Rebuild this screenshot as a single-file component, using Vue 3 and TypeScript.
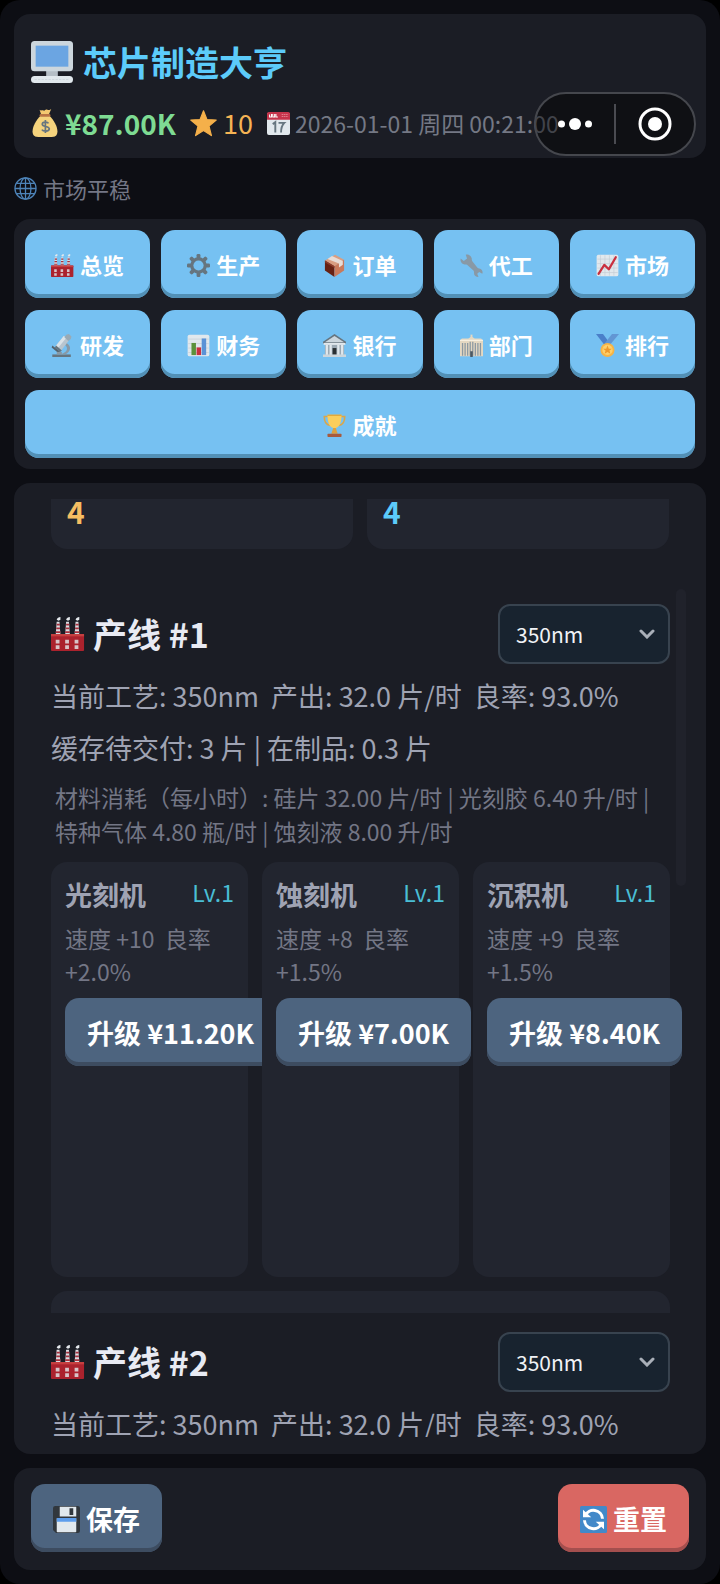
<script setup lang="ts">
import { ref } from 'vue'

interface NavItem {
  icon: string
  label: string
  wide?: boolean
}

interface Machine {
  name: string
  level: number
  effect: string
  cost: string
}

const nav: NavItem[] = [
  { icon: 'factory', label: '总览' },
  { icon: 'gear', label: '生产' },
  { icon: 'package', label: '订单' },
  { icon: 'wrench', label: '代工' },
  { icon: 'trend', label: '市场' },
  { icon: 'microscope', label: '研发' },
  { icon: 'bars', label: '财务' },
  { icon: 'bank', label: '银行' },
  { icon: 'store', label: '部门' },
  { icon: 'medal', label: '排行' },
  { icon: 'trophy', label: '成就', wide: true },
]

const machines: Machine[] = [
  { name: '光刻机', level: 1, effect: '速度 +10  良率 +2.0%', cost: '¥11.20K' },
  { name: '蚀刻机', level: 1, effect: '速度 +8  良率 +1.5%', cost: '¥7.00K' },
  { name: '沉积机', level: 1, effect: '速度 +9  良率 +1.5%', cost: '¥8.40K' },
]

const summary = '当前工艺: 350nm  产出: 32.0 片/时  良率: 93.0%'
const materials =
  '材料消耗（每小时）: 硅片 32.00 片/时 | 光刻胶 6.40 升/时 | 特种气体 4.80 瓶/时 | 蚀刻液 8.00 升/时'

const process1 = ref('350nm')
const process2 = ref('350nm')
</script>

<template>
  <svg class="sprite" aria-hidden="true">
    <symbol id="i-computer" viewBox="0 0 36 36">
      <rect x="13" y="24" width="10" height="8" fill="#b5bec6" />
      <rect x="0" y="0" width="36" height="26" rx="3" fill="#ccd6dd" />
      <rect x="4" y="4" width="28" height="18" fill="#6ba5e2" />
      <rect x="0" y="30" width="36" height="6" rx="3" fill="#e1e8ed" />
      <path d="M3 33h30" stroke="#cfd8de" stroke-width="1" stroke-dasharray="2 1" />
    </symbol>
    <symbol id="i-money" viewBox="0 0 36 36">
      <path d="M12 9h12c5 5 10 13 10 20 0 5-3 7-7 7H9c-4 0-7-2-7-7C2 22 7 14 12 9z" fill="#f5d37d" />
      <path d="M11 1c2 2 3 0 5 1s2-2 5-1 3 0 5-1l-3 7H13z" fill="#f5c870" />
      <rect x="11" y="6.500" width="14" height="3.500" rx="1.700" fill="#b97445" />
      <path d="M22.500 18.500c-1-2-8-2.500-8 1 0 4 9 2 9 6s-8 3.500-9.500 1M18.500 14v17" fill="none" stroke="#67757f" stroke-width="2.200" />
    </symbol>
    <symbol id="i-star" viewBox="0 0 36 36">
      <path d="M18 1l4.600 11.600L35 13.400l-9.600 8 3.200 12.800L18 27.400 7.400 34.200l3.200-12.800L1 13.400l12.400-.8z" fill="#f5b04a" stroke="#f5b04a" stroke-width="1.500" stroke-linejoin="round" />
    </symbol>
    <symbol id="i-calendar" viewBox="0 0 36 36">
      <rect x="0" y="1" width="36" height="35" rx="3" fill="#e1e8ed" />
      <path d="M3 0h30a3 3 0 0 1 3 3v9H0V3a3 3 0 0 1 3-3z" fill="#c5344b" />
      <path d="M4 4v4h3V3M9 3v5h3V3M14 3v5h3" fill="none" stroke="#fff" stroke-width="1.600" />
      <path d="M23 4h10M23 7h10" stroke="#e08492" stroke-width="1.600" stroke-dasharray="2 1" />
      <path d="M9 19l4-3v16M18 17h9c-4 4-5 9-5 15" fill="none" stroke="#66757f" stroke-width="3" />
    </symbol>
    <symbol id="i-globe" viewBox="0 0 36 36">
      <g fill="none" stroke="#4d83b8" stroke-width="2">
        <circle cx="18" cy="18" r="16.500" />
        <ellipse cx="18" cy="18" rx="8.500" ry="16.500" />
        <path d="M18 1.500v33M1.500 18h33M4 10h28M4 26h28" />
      </g>
    </symbol>
    <symbol id="i-factory" viewBox="0 0 36 36">
      <g v-for="x in [5, 15, 25]" :key="x">
        <path :d="`M${x + 1} 5h3l1 14h-5z`" fill="#d8dde2" />
        <path :d="`M${x + 1} 8h3.400M${x + 0.500} 12h4M${x} 16h5`" stroke="#a6303d" stroke-width="1.800" />
        <path :d="`M${x + 1} 3q1-3 4-3v3l-2 1z`" fill="#e5e9ed" />
      </g>
      <rect x="0" y="18" width="35" height="18" rx="1" fill="#ab222d" />
      <rect x="0" y="18" width="35" height="2.500" fill="#c63f40" />
      <g fill="#d8c4c8">
        <path d="M5 24h4v4H5zM15 24h4v4h-4zM25 24h4v4h-4zM5 30h4v4H5zM15 30h4v4h-4zM25 30h4v4h-4z" />
      </g>
    </symbol>
    <symbol id="i-gear" viewBox="0 0 36 36">
      <g fill="#66757f">
        <rect v-for="a in [0, 45, 90, 135]" :key="a" x="15" y="0" width="6" height="36" rx="2" :transform="`rotate(${a} 18 18)`" />
        <circle cx="18" cy="18" r="13" />
      </g>
      <circle cx="18" cy="18" r="8" fill="#76c1f2" />
    </symbol>
    <symbol id="i-package" viewBox="0 0 36 36">
      <path d="M3 10L19 1l14 8-15 11z" fill="#d99e82" />
      <path d="M3 10l15 9v17L3 26z" fill="#662113" />
      <path d="M18 19l15-10v17L18 36z" fill="#c97a5c" />
      <path d="M7 8l7-5 17 8v6l-6 4v-6z" fill="#e8dcd6" />
      <path d="M3 10l15 9v3L3 13z" fill="#8c3b29" />
    </symbol>
    <symbol id="i-wrench" viewBox="0 0 36 36">
      <path d="M9 1c4-1 8 1 9 5 1 2 0 3 1 5l8 10c2 2 4 1 6 3 2 2 3 4 2 7l-5-3-3 3 2 5c-4 0-7-2-7-5 0-2 0-4-1-5L11 17c-2-1-3 0-5-1-4-1-6-5-5-9l5 4 5-4z" fill="#8899a6" />
    </symbol>
    <symbol id="i-trend" viewBox="0 0 36 36">
      <rect x="1" y="1" width="34" height="34" rx="3" fill="#e1e8ed" />
      <path d="M7 2v32M14 2v32M21 2v32M28 2v32M2 8h32M2 15h32M2 22h32M2 29h32" stroke="#c3cdd5" stroke-width="1" />
      <path d="M4 31l9-14 7 7L31 5" fill="none" stroke="#c9303f" stroke-width="3.500" stroke-linecap="round" stroke-linejoin="round" />
    </symbol>
    <symbol id="i-microscope" viewBox="0 0 36 36">
      <path d="M2 32h29v4H2z" fill="#66757f" />
      <path d="M24 14c9 5 7 14-2 18h-7c10-3 13-9 7-15z" fill="#8899a6" />
      <path d="M2 18l13 10-2 3L1 21z" fill="#55636e" />
      <path d="M20 3l8 7-12 16-9-7z" fill="#b8c5cf" />
      <path d="M20 3l4 3-13 16-4-3z" fill="#dbe3e8" />
      <path d="M24 1l4-1 4 4-1 4-4 3-6-6z" fill="#99aab5" />
      <path d="M8 18l9 8-3 2-8-7z" fill="#66757f" />
      <path d="M9 28h8v4H9z" fill="#8899a6" />
    </symbol>
    <symbol id="i-bars" viewBox="0 0 36 36">
      <rect x="1" y="1" width="34" height="34" rx="3" fill="#e1e8ed" />
      <path d="M2 8h32M2 15h32M2 22h32M2 29h32" stroke="#c3cdd5" stroke-width="1" />
      <rect x="7" y="14" width="7" height="19" fill="#5c913b" />
      <rect x="15" y="21" width="7" height="12" fill="#c9303f" />
      <rect x="23" y="7" width="7" height="26" fill="#5a92d6" />
    </symbol>
    <symbol id="i-bank" viewBox="0 0 36 36">
      <rect x="3" y="14" width="30" height="19" fill="#9ba9b4" />
      <path d="M18 0l18 12v3H0v-3z" fill="#66757f" />
      <path d="M18 3l15 10H3z" fill="#ccd6dd" />
      <rect x="1" y="14" width="34" height="3" fill="#e1e8ed" />
      <path d="M6 17v16M12 17v16M24 17v16M30 17v16" stroke="#e1e8ed" stroke-width="3.500" />
      <rect x="15" y="22" width="6" height="11" fill="#292f33" />
      <rect x="0" y="32" width="36" height="4" fill="#ccd6dd" />
    </symbol>
    <symbol id="i-store" viewBox="0 0 36 36">
      <path d="M0 10l3-3h10l5-3 5 3h10l3 3v25H0z" fill="#e4d8c2" />
      <path d="M18 1v6" stroke="#e4d8c2" stroke-width="3" />
      <g stroke="#8c99a2" stroke-width="2">
        <path d="M4 14v20M8 14v20M12 14v20M16 12v22M20 12v22M24 14v20M28 14v20M32 14v20" />
      </g>
      <path d="M0 10h36" stroke="#f7efdf" stroke-width="2" />
      <rect x="16" y="27" width="4" height="9" fill="#4c5963" />
    </symbol>
    <symbol id="i-medal" viewBox="0 0 36 36">
      <path d="M0 0h11l8 11-6 6z" fill="#4a7fc9" />
      <path d="M36 0H25L14 14l7 4z" fill="#6296d4" />
      <circle cx="18" cy="25" r="11" fill="#f7b445" />
      <circle cx="18" cy="25" r="8" fill="#ffd06a" />
      <path d="M18 18l2 5h5l-4 3 1.500 5L18 28l-4.500 3 1.500-5-4-3h5z" fill="#f09a2b" />
    </symbol>
    <symbol id="i-trophy" viewBox="0 0 36 36">
      <path d="M8 4H2c0 8 2 13 9 14M28 4h6c0 8-2 13-9 14" fill="none" stroke="#d9a64c" stroke-width="2.500" />
      <path d="M7 1h22c0 12-3 19-9 21v8h-4v-8C10 20 7 13 7 1z" fill="#fbce5c" />
      <path d="M16 22h4l3 9H13z" fill="#dca03e" />
      <rect x="7" y="31" width="22" height="5" rx="1" fill="#a65a3e" />
      <rect x="7" y="1" width="22" height="2" fill="#e0a63c" />
    </symbol>
    <symbol id="i-floppy" viewBox="0 0 36 36">
      <path d="M3 0h30a3 3 0 0 1 3 3v30a3 3 0 0 1-3 3H4l-4-4V3a3 3 0 0 1 3-3z" fill="#31373d" />
      <rect x="9" y="1" width="22" height="13" fill="#e1e8ed" />
      <rect x="22" y="3" width="5" height="9" fill="#31373d" />
      <rect x="5" y="16" width="26" height="19" rx="1" fill="#e1e8ed" />
      <rect x="5" y="16" width="26" height="5" fill="#5d9dec" />
    </symbol>
    <symbol id="i-refresh" viewBox="0 0 36 36">
      <rect width="36" height="36" rx="2" fill="#4289c9" />
      <path d="M7 13a12 12 0 0 1 23 4M29 23a12 12 0 0 1-23-4" fill="none" stroke="#fff" stroke-width="4" />
      <path d="M4 5v10h11zM32 31V21H21z" fill="#fff" />
    </symbol>
  </svg>

  <div class="app">
    <header class="card header">
      <h1 class="title"><svg><use href="#i-computer" /></svg>芯片制造大亨</h1>
      <div class="stats">
        <span class="money"><svg><use href="#i-money" /></svg>¥87.00K</span>
        <span class="fame"><svg><use href="#i-star" /></svg>10</span>
        <span class="date"><svg><use href="#i-calendar" /></svg>2026-01-01 周四 00:21:00</span>
      </div>
    </header>

    <div class="capsule">
      <button type="button" aria-label="更多">
        <svg viewBox="0 0 36 36" fill="#fff">
          <circle cx="4.500" cy="18" r="3.500" />
          <circle cx="18" cy="18" r="6" />
          <circle cx="31.500" cy="18" r="3.500" />
        </svg>
      </button>
      <button type="button" aria-label="关闭">
        <svg viewBox="0 0 36 36">
          <circle cx="18" cy="18" r="15" fill="none" stroke="#fff" stroke-width="3" />
          <circle cx="18" cy="18" r="7" fill="#fff" />
        </svg>
      </button>
    </div>

    <p class="market"><svg><use href="#i-globe" /></svg>市场平稳</p>

    <nav class="card nav">
      <button v-for="item in nav" :key="item.label" type="button" class="btn" :class="{ wide: item.wide }">
        <svg><use :href="`#i-${item.icon}`" /></svg>{{ item.label }}
      </button>
    </nav>

    <main class="card main">
      <div class="viewport">
        <div class="totals">
          <div class="total gold">4</div>
          <div class="total cyan">4</div>
        </div>

        <section class="line first">
          <div class="line-head">
            <h2><svg><use href="#i-factory" /></svg>产线 #1</h2>
            <div class="picker">
              <select v-model="process1" aria-label="产线 #1 工艺">
                <option>350nm</option>
              </select>
              <svg viewBox="0 0 16 10"><path d="M2 2l6 6 6-6" /></svg>
            </div>
          </div>
          <p class="info">{{ summary }}</p>
          <p class="info">缓存待交付: 3 片 | 在制品: 0.3 片</p>
          <p class="materials">{{ materials }}</p>
          <div class="machines">
            <article v-for="m in machines" :key="m.name" class="machine">
              <div class="machine-head">
                <h3>{{ m.name }}</h3>
                <span>Lv.{{ m.level }}</span>
              </div>
              <p>{{ m.effect }}</p>
              <button type="button" class="btn slate">升级 {{ m.cost }}</button>
            </article>
          </div>
          <div class="panel"></div>
          <div class="thumb"></div>
        </section>

        <section class="line">
          <div class="line-head">
            <h2><svg><use href="#i-factory" /></svg>产线 #2</h2>
            <div class="picker">
              <select v-model="process2" aria-label="产线 #2 工艺">
                <option>350nm</option>
              </select>
              <svg viewBox="0 0 16 10"><path d="M2 2l6 6 6-6" /></svg>
            </div>
          </div>
          <p class="info">{{ summary }}</p>
        </section>
      </div>
    </main>

    <footer class="card footer">
      <button type="button" class="btn slate"><svg><use href="#i-floppy" /></svg>保存</button>
      <button type="button" class="btn red"><svg><use href="#i-refresh" /></svg>重置</button>
    </footer>
  </div>
</template>

<style>
body {
  margin: 0;
  background: #000;
}
</style>

<style scoped>
.sprite {
  position: absolute;
  width: 0;
  height: 0;
}

.app {
  position: relative;
  box-sizing: border-box;
  height: 100vh;
  padding: 14px;
  display: flex;
  flex-direction: column;
  gap: 14px;
  border-radius: 20px;
  background: #0d0e14;
  color: #9fa3b3;
  font-family: 'Noto Sans CJK SC', sans-serif;
}

h1,
h2,
h3,
p {
  margin: 0;
}

svg {
  flex: none;
}

.card {
  border-radius: 16px;
  background: #1b1d25;
}

.header {
  padding: 20px 17px 18px;
}

.title {
  display: flex;
  align-items: center;
  gap: 10px;
  font-size: 34px;
  line-height: 56px;
  color: #5ccbfa;
}

.title svg {
  width: 42px;
  height: 42px;
}

.stats {
  display: flex;
  align-items: center;
  gap: 14px;
  margin-top: 16px;
  line-height: 34px;
  white-space: nowrap;
}

.stats span {
  display: flex;
  align-items: center;
}

.money {
  gap: 6px;
  font-size: 28px;
  font-weight: 700;
  color: #7edb93;
}

.money svg {
  width: 28px;
  height: 28px;
}

.fame {
  gap: 6px;
  font-size: 27px;
  color: #f5b354;
}

.fame svg {
  width: 27px;
  height: 27px;
}

.date {
  gap: 5px;
  font-size: 23px;
  color: #747884;
}

.date svg {
  width: 23px;
  height: 23px;
}

.capsule {
  position: absolute;
  top: 92px;
  right: 24px;
  box-sizing: border-box;
  width: 162px;
  height: 64px;
  display: flex;
  align-items: center;
  border: 2px solid #45474d;
  border-radius: 32px;
  background: rgba(0, 0, 0, 0.44);
}

.capsule button {
  flex: 1;
  height: 40px;
  padding: 0;
  display: flex;
  align-items: center;
  justify-content: center;
  border: 0;
  background: none;
}

.capsule button + button {
  border-left: 2px solid #4a4b51;
}

.capsule svg {
  width: 36px;
  height: 36px;
}

.market {
  display: flex;
  align-items: center;
  gap: 6px;
  font-size: 22px;
  line-height: 33px;
  color: #747786;
}

.market svg {
  width: 23px;
  height: 23px;
}

.nav {
  padding: 11px;
  display: grid;
  grid-template-columns: repeat(5, 1fr);
  gap: 12px 11px;
}

.btn {
  height: 68px;
  padding: 0 22px;
  display: flex;
  align-items: center;
  justify-content: center;
  gap: 6px;
  border: 0;
  border-radius: 14px;
  background: #76c1f2;
  box-shadow: inset 0 -4px #5290b6;
  color: #fff;
  font-family: inherit;
  font-size: 27px;
  font-weight: 700;
  white-space: nowrap;
}

.btn svg {
  width: 27px;
  height: 27px;
  margin-top: 3px;
}

.nav .btn {
  padding: 0;
  font-size: 22px;
}

.nav .btn svg {
  width: 23px;
  height: 23px;
}

.nav .wide {
  grid-column: 1 / -1;
}

.slate {
  background: #4d647f;
  box-shadow: inset 0 -4px #3d4c60;
}

.red {
  background: #d96762;
  box-shadow: inset 0 -4px #a44f4e;
}

.main {
  flex: 1;
  min-height: 0;
  padding: 16px 0 17px;
  display: flex;
}

.viewport {
  flex: 1;
  overflow: hidden;
}

.totals {
  display: grid;
  grid-template-columns: 1fr 1fr;
  gap: 14px;
  padding: 0 37px;
  margin-bottom: 36px;
}

.total {
  height: 50px;
  box-sizing: border-box;
  padding: 0 16px;
  border-radius: 0 0 16px 16px;
  background: #22252f;
  font-size: 30px;
  font-weight: 700;
  line-height: 24px;
}

.gold {
  color: #f5be62;
}

.cyan {
  color: #5ccbfa;
}

.line {
  position: relative;
  box-sizing: border-box;
  padding: 19px 36px 0 37px;
}

.first {
  height: 728px;
  overflow: hidden;
}

.line-head {
  display: flex;
  align-items: center;
  justify-content: space-between;
}

h2 {
  display: flex;
  align-items: center;
  gap: 8px;
  font-size: 34px;
  line-height: 60px;
  color: #e8eaf3;
}

h2 svg {
  width: 34px;
  height: 34px;
}

.picker {
  position: relative;
}

.picker select {
  appearance: none;
  box-sizing: border-box;
  width: 172px;
  height: 60px;
  padding: 0 40px 0 16px;
  border: 2px solid #38434f;
  border-radius: 12px;
  background: #18232f;
  color: #f0f2f6;
  font-family: inherit;
  font-size: 21px;
}

.picker svg {
  position: absolute;
  top: 25px;
  right: 15px;
  width: 16px;
  height: 10px;
  fill: none;
  stroke: #a9afb8;
  stroke-width: 3;
  stroke-linecap: round;
  pointer-events: none;
}

.info {
  margin-top: 12px;
  font-size: 27px;
  line-height: 40px;
  white-space: pre-wrap;
}

.materials {
  margin: 12px 4px 14px;
  font-size: 23px;
  line-height: 34px;
  color: #737685;
}

.machines {
  display: grid;
  grid-template-columns: repeat(3, minmax(0, 1fr));
  gap: 14px;
}

.machine {
  isolation: isolate;
  box-sizing: border-box;
  min-height: 415px;
  padding: 14px;
  border-radius: 16px;
  background: #22252f;
}

.machine-head {
  display: flex;
  align-items: flex-start;
  justify-content: space-between;
  margin-bottom: 8px;
}

h3 {
  font-size: 27px;
  line-height: 38px;
}

.machine-head span {
  font-size: 23px;
  line-height: 33px;
  color: #4abed5;
}

.machine p {
  margin-bottom: 10px;
  font-size: 23px;
  line-height: 33px;
  white-space: pre-wrap;
  color: #737685;
}

.panel {
  height: 120px;
  margin-top: 14px;
  border-radius: 16px;
  background: #22252f;
}

.thumb {
  position: absolute;
  top: 4px;
  right: 20px;
  width: 10px;
  height: 297px;
  border-radius: 5px;
  background: #20222b;
}

.footer {
  padding: 16px 17px 18px;
  display: flex;
  justify-content: space-between;
}
</style>
